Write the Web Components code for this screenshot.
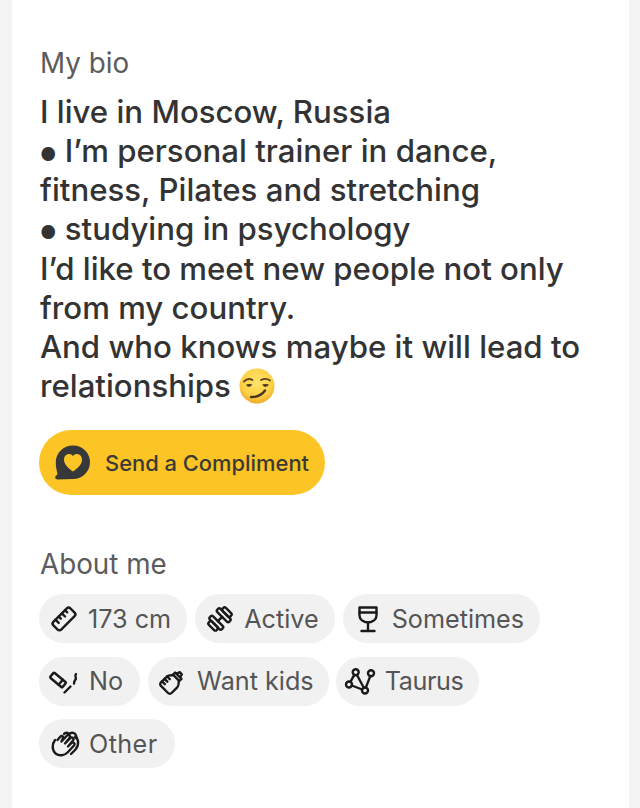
<!DOCTYPE html>
<html>
<head>
<meta charset="utf-8">
<style>
    html, body { margin: 0; padding: 0; }
    body {
        width: 640px;
        height: 808px;
        overflow: hidden;
        background: #f4f4f4;
        font-family: Inter, "Liberation Sans", sans-serif;
    }
</style>
</head>
<body>
<profile-card>
    <profile-section heading="My bio">
        <bio-text>
            I live in Moscow, Russia<br>
            <span class="dot">●</span> I’m personal trainer in dance,<br>
            fitness, Pilates and stretching<br>
            <span class="dot">●</span> studying in psychology<br>
            I’d like to meet new people not only<br>
            from my country.<br>
            And who knows maybe it will lead to<br>
            relationships <smirk-emoji></smirk-emoji>
        </bio-text>
        <compliment-button>Send a Compliment</compliment-button>
    </profile-section>
    <profile-section heading="About me" class="about">
        <chip-list>
            <info-chip icon="ruler">173 cm</info-chip>
            <info-chip icon="dumbbell">Active</info-chip>
            <info-chip icon="wine">Sometimes</info-chip>
            <info-chip icon="smoke" style="padding: 0 17px 0 12px">No</info-chip>
            <info-chip icon="bottle" style="padding-right: 15px">Want kids</info-chip>
            <info-chip icon="stars" style="margin-left: -1px; letter-spacing: -.4px">Taurus</info-chip>
            <info-chip icon="hands" style="padding: 0 17px 0 12px; letter-spacing: .4px">Other</info-chip>
        </chip-list>
    </profile-section>
</profile-card>

<script>
const cardTemplate = document.createElement('template');
cardTemplate.innerHTML = `
    <style>
        :host {
            display: block;
            box-sizing: border-box;
            width: 617px;
            height: 808px;
            margin-left: 12px;
            padding: 44px 28px 0 28px;
            background: #fff;
        }
    </style>
    <slot></slot>
`;

class ProfileCard extends HTMLElement {
    constructor() {
        super();
        this.attachShadow({mode: 'open'}).appendChild(cardTemplate.content.cloneNode(true));
    }
}

const sectionTemplate = document.createElement('template');
sectionTemplate.innerHTML = `
    <style>
        :host { display: block; }
        :host(.about) { margin-top: 50px; }
        h2 {
            margin: 0 0 10px 0;
            font-size: 27.8px;
            line-height: 39px;
            font-weight: 400;
            color: #5c5c5c;
        }
    </style>
    <h2></h2>
    <slot></slot>
`;

class ProfileSection extends HTMLElement {
    constructor() {
        super();
        this.attachShadow({mode: 'open'}).appendChild(sectionTemplate.content.cloneNode(true));
        this.shadowRoot.querySelector('h2').textContent = this.getAttribute('heading');
    }
}

const bioTemplate = document.createElement('template');
bioTemplate.innerHTML = `
    <style>
        :host {
            display: block;
            font-size: 31.2px;
            line-height: 39.15px;
            font-weight: 500;
            color: #333;
            white-space: nowrap;
        }
        ::slotted(.dot) {
            font-size: 18px;
            line-height: 0;
            vertical-align: 1px;
        }
    </style>
    <slot></slot>
`;

class BioText extends HTMLElement {
    constructor() {
        super();
        this.attachShadow({mode: 'open'}).appendChild(bioTemplate.content.cloneNode(true));
    }
}

const emojiTemplate = document.createElement('template');
emojiTemplate.innerHTML = `
    <style>
        :host { display: inline-block; width: 36px; height: 36px; vertical-align: 1px; margin: -8px 0 -8px 0; }
        svg { display: block; }
    </style>
    <svg viewBox="0 0 36 36" width="36" height="36">
        <defs>
            <radialGradient id="face" cx="50%" cy="38%" r="62%">
                <stop offset="0" stop-color="#ffe36b"/>
                <stop offset="0.7" stop-color="#fdd044"/>
                <stop offset="1" stop-color="#f1a72a"/>
            </radialGradient>
        </defs>
        <circle cx="18" cy="18" r="17.5" fill="url(#face)"/>
        <path d="M5 13.5 Q9 9.5 13.5 12" fill="none" stroke="#5a4020" stroke-width="1.8" stroke-linecap="round"/>
        <path d="M22 12 Q27 9.5 31 12.5" fill="none" stroke="#5a4020" stroke-width="1.8" stroke-linecap="round"/>
        <path d="M7 16.5 Q10.5 15.5 13.5 16.5 Q11 19.5 8.5 18.5 Z" fill="#4a3420"/>
        <path d="M23 16.5 Q26.5 15.5 30 16.5 Q28 19.5 25 18.5 Z" fill="#4a3420"/>
        <path d="M12 29 Q21 29.5 26 22.5" fill="none" stroke="#4a3420" stroke-width="2.4" stroke-linecap="round"/>
    </svg>
`;

class SmirkEmoji extends HTMLElement {
    constructor() {
        super();
        this.attachShadow({mode: 'open'}).appendChild(emojiTemplate.content.cloneNode(true));
    }
}

const buttonTemplate = document.createElement('template');
buttonTemplate.innerHTML = `
    <style>
        :host {
            display: inline-flex;
            align-items: center;
            box-sizing: border-box;
            width: 286px;
            height: 65px;
            margin: 24px 0 0 -1px;
            padding-left: 15px;
            gap: 14px;
            border-radius: 33px;
            background: #fdc425;
            color: #3a3a36;
            font-size: 21.9px;
            font-weight: 500;
            white-space: nowrap;
        }
        svg { flex: none; }
    </style>
    <svg viewBox="0 0 37 37" width="37" height="37">
        <path fill="#37383a" d="M19 1.5 C28.6 1.5 36 9 36 18 C36 27.5 28.5 35 19 35 L3.5 35.5 C1.2 35.5 .4 33 2.2 31.6 C3.4 30.6 3.6 29.6 3.2 28.4 C2.3 25.6 1.8 21.4 1.8 18 C1.8 9 9.4 1.5 19 1.5 Z"/>
        <path fill="#fdc425" d="M19 27.5 C14 24 10 20.500 10 15.500 C10 12.200 12.500 10 15.200 10 C16.900 10 18.200 10.900 19 12.200 C19.800 10.900 21.100 10 22.800 10 C25.500 10 28 12.200 28 15.500 C28 20.500 24 24 19 27.500 Z"/>
    </svg>
    <slot></slot>
`;

class ComplimentButton extends HTMLElement {
    constructor() {
        super();
        this.attachShadow({mode: 'open'}).appendChild(buttonTemplate.content.cloneNode(true));
    }
}

const chipListTemplate = document.createElement('template');
chipListTemplate.innerHTML = `
    <style>
        :host {
            display: flex;
            flex-wrap: wrap;
            gap: 13.4px 8px;
            margin-left: -1px;
        }
    </style>
    <slot></slot>
`;

class ChipList extends HTMLElement {
    constructor() {
        super();
        this.attachShadow({mode: 'open'}).appendChild(chipListTemplate.content.cloneNode(true));
    }
}

const chipIcons = {
    ruler: `<g transform="rotate(-45 14 14)"><rect x="2" y="8.500" width="24" height="11" rx="2.500"/><path d="M7.500 8.500v4.500M12 8.500v3M16.500 8.500v4.500M21 8.500v3"/></g>`,
    dumbbell: `<g transform="rotate(-45 14 14)"><path d="M11 14h6"/><rect x="6.500" y="5.500" width="4.500" height="17" rx="1.800"/><rect x="17" y="5.500" width="4.500" height="17" rx="1.800"/><rect x="2" y="8.500" width="4.500" height="11" rx="1.800"/><rect x="21.500" y="8.500" width="4.500" height="11" rx="1.800"/></g>`,
    wine: `<path d="M5.500 2.500h17v8a8.500 7 0 0 1-17 0z"/><path d="M5.500 7.500h17M14 17.500v8.500M7.500 26h13"/>`,
    smoke: `<g transform="rotate(40 7 13)"><rect x="-1" y="9.750" width="16" height="6.500" rx="1"/><path d="M10.500 9.750v6.500"/></g><path d="M13.500 25.500l6-6"/><path d="M25 7c-2 2 1 3.500-.5 5.500c-.5 1-1.500 2-1.500 4"/>`,
    bottle: `<g transform="rotate(45 14 14)"><path d="M6.500 15.500c0-3 2.500-4.500 4-6h7c1.500 1.500 4 3 4 6v8a2.500 2.500 0 0 1-2.500 2.500H9a2.500 2.500 0 0 1-2.500-2.500z"/><path d="M9.500 9.500V6.500h9v3M11.500 6.500 12.500 3h3l1 3.500M6.500 15h4M6.500 18.500h4M6.500 22h4"/></g>`,
    stars: `<circle cx="8.700" cy="5.200" r="3"/><circle cx="24" cy="6.200" r="3"/><circle cx="2" cy="17.500" r="3"/><circle cx="18" cy="23.500" r="3"/><path d="M7.300 7.900 3.400 14.800M10 8 16.800 20.700M23.300 9.100 18.800 20.600M4.800 18.500 15.200 22.500"/>`,
    hands: `<path d="M4 10C1 14 .8 20 4.500 23.500C8.500 26.500 13.500 25.500 16.500 22.500L23 15.500C24.500 13.500 22 11.500 20.500 13L17 16.500L22 10.500C23.500 8.500 21 6.500 19.500 8L14 13.500L18.500 8C20 6 17.500 4 16 5.500L10.500 11.500L12 8C12.500 6 10.500 5.500 9.500 6.500L6.500 10"/><path d="M13 4C14.500 2 17 2.500 18 4M19 3.500C21 2 23.500 3 24.500 4.500L27 11C27.500 14 26.500 17 24.500 19.500L20 24M24 7L26 9"/>`
};

const chipTemplate = document.createElement('template');
chipTemplate.innerHTML = `
    <style>
        :host {
            display: inline-flex;
            align-items: center;
            box-sizing: border-box;
            height: 49px;
            padding: 0 16px 0 11px;
            gap: 10px;
            border-radius: 25px;
            background: #f1f1f1;
            color: #555;
            font-size: 25.2px;
            white-space: nowrap;
        }
        svg {
            flex: none;
            overflow: visible;
            fill: none;
            stroke: #1a1a1a;
            stroke-width: 2.4;
            stroke-linecap: round;
            stroke-linejoin: round;
        }
    </style>
    <svg viewBox="0 0 28 28" width="28" height="28"></svg>
    <slot></slot>
`;

class InfoChip extends HTMLElement {
    constructor() {
        super();
        this.attachShadow({mode: 'open'}).appendChild(chipTemplate.content.cloneNode(true));
        this.shadowRoot.querySelector('svg').innerHTML = chipIcons[this.getAttribute('icon')];
    }
}

window.customElements.define('profile-card', ProfileCard);
window.customElements.define('profile-section', ProfileSection);
window.customElements.define('bio-text', BioText);
window.customElements.define('smirk-emoji', SmirkEmoji);
window.customElements.define('compliment-button', ComplimentButton);
window.customElements.define('chip-list', ChipList);
window.customElements.define('info-chip', InfoChip);
</script>
</body>
</html>
